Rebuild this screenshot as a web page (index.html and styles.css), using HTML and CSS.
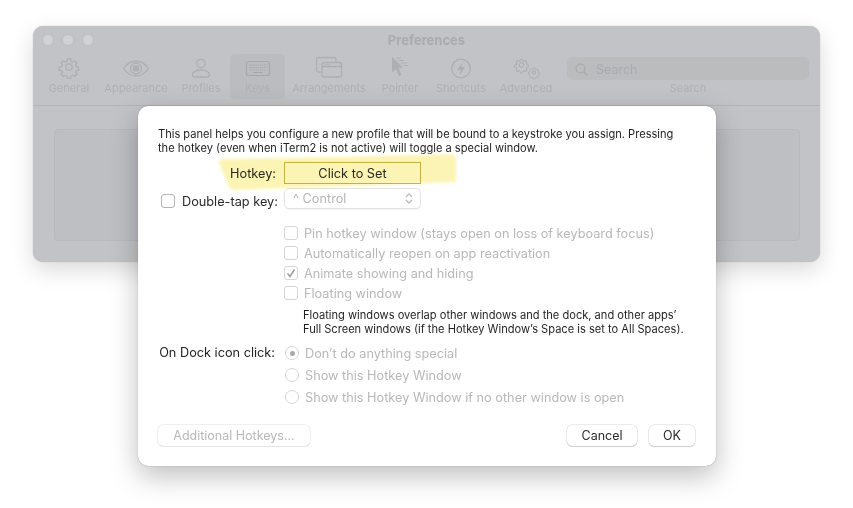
FILE: index.html
```html
<!DOCTYPE html>
<html lang="en">
<head>
<meta charset="utf-8">
<title>Preferences</title>
<link rel="stylesheet" href="styles.css">
</head>
<body>
<div class="window">
  <div class="titlebar">
    <div class="lights"><i></i><i></i><i></i></div>
    <div class="title">Preferences</div>
  </div>
  <div class="toolbar">
    <div class="tool w-general">
      <svg width="26" height="26" viewBox="0 0 26 26" fill="none" stroke="#aeafb2" stroke-width="1.300"><path stroke-width="1.700" stroke-linejoin="round" d="M11 2.500h4l.6 3 2.200 1 2.600-1.600 2.800 2.800-1.600 2.600 1 2.200 3 .6v4l-3 .6-1 2.200 1.600 2.600-2.800 2.800-2.600-1.600-2.200 1-.6 3h-4l-.6-3-2.200-1-2.600 1.600-2.800-2.800 1.600-2.600-1-2.200-3-.6v-4l3-.6 1-2.200-1.600-2.600 2.800-2.800 2.600 1.600 2.200-1z" transform="translate(3 3) scale(.77)"/><circle cx="13" cy="13" r="3.200"/></svg>
      <span>General</span>
    </div>
    <div class="tool w-appearance">
      <svg width="28" height="26" viewBox="0 0 28 26" fill="none" stroke="#aeafb2" stroke-width="1.300"><path d="M1.500 14.500C5 9.500 9 7 14 7s9 2.500 12.500 7.500C23 19.500 19 22 14 22S5 19.500 1.500 14.500z"/><circle cx="14" cy="14.500" r="5.500"/><circle cx="14" cy="14.500" r="2.600" fill="#aeafb2"/></svg>
      <span>Appearance</span>
    </div>
    <div class="tool w-profiles">
      <svg width="26" height="26" viewBox="0 0 26 26" fill="none" stroke="#aeafb2" stroke-width="1.300"><circle cx="13" cy="9.500" r="4.200"/><path d="M4.500 20.500c0-2.500 3.500-4.500 8.500-4.500s8.500 2 8.500 4.500c0 1.500-.8 2.500-2 2.500h-13c-1.200 0-2-1-2-2.500z"/></svg>
      <span>Profiles</span>
    </div>
    <div class="tool tool-on w-keys">
      <svg width="26" height="26" viewBox="0 0 26 26" fill="none" stroke="#a6a7aa" stroke-width="1.200"><rect x="1.500" y="7.500" width="23" height="14" rx="2"/><path d="M4.500 11h17M4.500 13.500h17M4.500 16h17" stroke-dasharray="1.200 .9"/><path d="M8 18.500h10"/></svg>
      <span>Keys</span>
    </div>
    <div class="tool w-arrange">
      <svg width="28" height="26" viewBox="0 0 28 26" fill="none" stroke="#aeafb2" stroke-width="1.300"><path d="M6 18H3.500a2 2 0 0 1-2-2V5.500a2 2 0 0 1 2-2H19a2 2 0 0 1 2 2V8"/><rect x="7" y="8.500" width="19.500" height="14.500" rx="2"/><path d="M7 12.500h19.500"/><path d="M9.500 10.500h6" stroke-dasharray="1.200 1"/></svg>
      <span>Arrangements</span>
    </div>
    <div class="tool w-pointer">
      <svg width="26" height="26" viewBox="0 0 26 26" fill="#aeafb2"><path d="M5 3l11 10.500-4.500.6 3 7-2.500 1.200-3-7-4 3z"/><path d="M9 3.500h5v1.100h-4zM11 6h6v1.100h-5zM13.500 8.500h6v1.100h-5zM16 11h5v1.100h-4z"/></svg>
      <span>Pointer</span>
    </div>
    <div class="tool w-shortcuts">
      <svg width="26" height="26" viewBox="0 0 26 26" fill="none" stroke="#aeafb2" stroke-width="1.300"><circle cx="13" cy="14.500" r="9.300"/><path d="M14.800 8L9 16h3.500l-1 5L17 13h-3.500z" fill="#aeafb2" stroke="none"/></svg>
      <span>Shortcuts</span>
    </div>
    <div class="tool w-advanced">
      <svg width="28" height="26" viewBox="0 0 28 26" fill="none" stroke="#aeafb2" stroke-width="1.100"><path stroke-width="2" stroke-linejoin="round" d="M11 2.500h4l.6 3 2.200 1 2.600-1.600 2.800 2.800-1.600 2.600 1 2.200 3 .6v4l-3 .6-1 2.200 1.600 2.600-2.800 2.800-2.600-1.600-2.200 1-.6 3h-4l-.6-3-2.200-1-2.600 1.600-2.800-2.800 1.600-2.600-1-2.200-3-.6v-4l3-.6 1-2.200-1.600-2.600 2.800-2.800 2.600 1.600 2.200-1z" transform="translate(2.480 3.980) scale(.54)"/><circle cx="9.500" cy="11" r="2.200"/><path fill="#c2c3c6" stroke-width="2.200" stroke-linejoin="round" d="M11 2.500h4l.6 3 2.200 1 2.600-1.600 2.800 2.800-1.600 2.600 1 2.200 3 .6v4l-3 .6-1 2.200 1.600 2.600-2.800 2.800-2.600-1.600-2.200 1-.6 3h-4l-.6-3-2.200-1-2.600 1.600-2.800-2.800 1.600-2.600-1-2.200-3-.6v-4l3-.6 1-2.200-1.600-2.600 2.800-2.800 2.600 1.600 2.200-1z" transform="translate(16.280 12.780) scale(.44)"/><circle cx="22" cy="18.500" r="1.600"/></svg>
      <span>Advanced</span>
    </div>
    <div class="search-tool">
      <div class="search">
        <svg width="13" height="13" viewBox="0 0 13 13" fill="none" stroke="#a6a7aa" stroke-width="1.100"><circle cx="5.500" cy="5.500" r="4.500"/><path d="M8.800 8.800L12.500 12.500"/></svg>
        <span>Search</span>
      </div>
      <span class="search-label">Search</span>
    </div>
  </div>
  <div class="well-area"><div class="well"></div></div>
</div>

<div class="sheet">
  <p class="intro">This panel helps you configure a new profile that will be bound to a keystroke you assign. Pressing<br>the hotkey (even when iTerm2 is not active) will toggle a special window.</p>

  <div class="row row-hotkey">
    <label class="lab lab-hotkey">Hotkey:</label>
    <div class="hotkey-box">Click to Set</div>
  </div>

  <div class="row row-double">
    <div class="double-left"><i class="check check-dark"></i><span>Double-tap key:</span></div>
    <div class="select"><span>^ Control</span>
      <svg width="8" height="13" viewBox="0 0 8 13" fill="none" stroke="#b9b9b9" stroke-width="1.200"><path d="M1 5l3-3.200L7 5M1 8l3 3.200L7 8"/></svg>
    </div>
  </div>

  <div class="options">
    <div class="opt"><i class="check"></i><span>Pin hotkey window (stays open on loss of keyboard focus)</span></div>
    <div class="opt"><i class="check"></i><span>Automatically reopen on app reactivation</span></div>
    <div class="opt"><i class="check"><svg width="14" height="14" viewBox="0 0 14 14" fill="none" stroke="#9b9b9b" stroke-width="1.500"><path d="M3.500 7.500l2.500 3 4.500-7"/></svg></i><span>Animate showing and hiding</span></div>
    <div class="opt"><i class="check"></i><span>Floating window</span></div>
  </div>

  <p class="note">Floating windows overlap other windows and the dock, and other apps’<br>Full Screen windows (if the Hotkey Window’s Space is set to All Spaces).</p>

  <div class="dock">
    <div class="lab lab-dock">On Dock icon click:</div>
    <div class="radios">
      <div class="radio-row"><i class="radio radio-on"></i><span>Don’t do anything special</span></div>
      <div class="radio-row"><i class="radio"></i><span>Show this Hotkey Window</span></div>
      <div class="radio-row"><i class="radio"></i><span>Show this Hotkey Window if no other window is open</span></div>
    </div>
  </div>

  <div class="footer">
    <button class="btn btn-off">Additional Hotkeys...</button>
    <div class="footer-right">
      <button class="btn btn-cancel">Cancel</button>
      <button class="btn btn-ok">OK</button>
    </div>
  </div>

  <svg class="marker" width="244" height="42" viewBox="0 0 244 42"><polygon points="3,10 8,8 120,6 238,3 241,6 241,31 160,34 18,39 14,36" fill="#fcf4b4"/></svg>
</div>
</body>
</html>
```
FILE: styles.css
```css
* { box-sizing: border-box; }
html, body { margin: 0; padding: 0; }
body {
  width: 853px;
  height: 508px;
  background: #fff;
  position: relative;
  overflow: hidden;
  font-family: Inter, "Liberation Sans", sans-serif;
  font-size: 12px;
  color: #222;
}
.window {
  position: absolute;
  left: 33px;
  top: 26px;
  width: 787px;
  height: 236px;
  border-radius: 10px;
  background: #c2c3c6;
  box-shadow: 0 0 1px #a9a9ab, 0 8px 22px rgba(0,0,0,.15);
  display: flex;
  flex-direction: column;
  overflow: hidden;
}
.titlebar { height: 27px; position: relative; display: flex; justify-content: center; align-items: center; padding-top: 1px; }
.lights { position: absolute; left: 9px; top: 8px; display: flex; gap: 8px; }
.lights i { width: 12px; height: 12px; border-radius: 50%; background: #d0d1d3; border: 1px solid #bbbcbf; }
.title { font-size: 13px; font-weight: 700; color: #aaabae; }
.toolbar { height: 53px; display: flex; align-items: flex-start; padding-top: 1px; border-bottom: 1px solid #b3b4b7; color: #b0b1b4; font-size: 11px; }
.tool { height: 45px; display: flex; flex-direction: column; align-items: center; justify-content: flex-end; gap: 1px; padding-bottom: 4px; border-radius: 5px; white-space: nowrap; }
.tool svg { flex: none; }
.w-general { width: 50px; margin-left: 11px; }
.w-appearance { width: 76px; margin-left: 4px; }
.w-profiles { width: 48px; margin-left: 3px; }
.tool-on { background: #bbbcbf; }
.w-keys { width: 55px; margin-left: 5px; }
.w-arrange { width: 80px; margin-left: 4px; }
.w-pointer { width: 50px; margin-left: 6px; }
.w-shortcuts { width: 56px; margin-left: 8px; }
.w-advanced { width: 56px; margin-left: 9px; }
.search-tool { width: 242px; margin-left: 13px; display: flex; flex-direction: column; align-items: center; padding-top: 3px; }
.search { width: 100%; height: 23px; border-radius: 5px; background: #bbbcbe; display: flex; align-items: center; gap: 8px; padding: 1px 0 0 8px; font-size: 12.500px; color: #a9aaad; }
.search-label { margin-top: 1px; }
.well-area { flex: 1; padding: 23px 20px 21px 21px; }
.well { height: 100%; background: #bebfc2; border: 1px solid #b8b9bc; border-radius: 4px; }

.sheet {
  position: absolute;
  left: 138px;
  top: 106px;
  width: 578px;
  height: 360px;
  background: #fff;
  border-radius: 10px;
  box-shadow: 0 0 1px rgba(0,0,0,.45), 0 10px 28px rgba(0,0,0,.26);
  padding: 21px 20px 0 20px;
  font-size: 12.720px;
  color: #2a2a2a;
}
.intro { margin: 0; font-size: 11.080px; line-height: 14px; color: #1f1f1f; white-space: nowrap; }
.row { display: flex; align-items: center; }
.row-hotkey { margin-top: 7px; height: 22px; }
.lab { white-space: nowrap; }
.lab-hotkey { width: 118px; text-align: right; }
.hotkey-box { margin-left: 8px; width: 137px; height: 22px; border: 1px solid #c4b95a; display: flex; align-items: center; justify-content: center; }
.row-double { margin-top: 4px; height: 21px; }
.double-left { width: 126px; display: flex; align-items: center; gap: 7px; margin-left: 3px; margin-right: -3px; padding-top: 5px; white-space: nowrap; }
.check { flex: none; width: 14px; height: 14px; border-radius: 3px; border: 1px solid #d6d6d6; background: #fff; display: flex; align-items: center; justify-content: center; }
.check svg { margin: -1px; }
.check-dark { border-color: #b4b4b4; }
.select { width: 137px; height: 21px; border: 1px solid #e3e3e3; border-radius: 5px; display: flex; align-items: center; justify-content: space-between; padding: 0 7px 0 8px; color: #b5b5b5; box-shadow: 0 1px 1px rgba(0,0,0,.05); }
.options { margin: 17px 0 0 126px; display: flex; flex-direction: column; gap: 6px; color: #b8b8b8; }
.opt { display: flex; align-items: center; gap: 6px; height: 14px; white-space: nowrap; }
.note { margin: 8px 0 0 145px; font-size: 11.100px; line-height: 14px; white-space: nowrap; color: #1f1f1f; }
.dock { margin-top: 9px; display: flex; }
.lab-dock { width: 117px; text-align: right; line-height: 16px; color: #222; }
.radios { margin-left: 10px; display: flex; flex-direction: column; gap: 6px; color: #b8b8b8; }
.radio-row { height: 16px; display: flex; align-items: center; gap: 6px; white-space: nowrap; }
.radio { flex: none; width: 14px; height: 14px; border-radius: 50%; border: 1px solid #d6d6d6; background: #fff; display: flex; align-items: center; justify-content: center; }
.radio-on::after { content: ""; width: 5px; height: 5px; border-radius: 50%; background: #a8a8a8; }
.footer { position: absolute; left: 20px; right: 21px; top: 319px; display: flex; justify-content: space-between; align-items: center; }
.footer-right { display: flex; gap: 12px; }
.btn { height: 21px; padding: 0; border: 0; border-radius: 5px; background: #fff; font-family: inherit; font-size: 12.500px; color: #2a2a2a; box-shadow: 0 0 0 .5px rgba(0,0,0,.16), 0 1px 1px rgba(0,0,0,.12); }
.btn-off { width: 152px; color: #b8b8b8; box-shadow: 0 0 0 .5px rgba(0,0,0,.12), 0 1px 1px rgba(0,0,0,.05); }
.btn-cancel { width: 70px; }
.btn-ok { width: 46px; }
.marker {
  position: absolute;
  left: 77px;
  top: 45px;
  filter: blur(1.500px);
  mix-blend-mode: multiply;
  pointer-events: none;
}
```
